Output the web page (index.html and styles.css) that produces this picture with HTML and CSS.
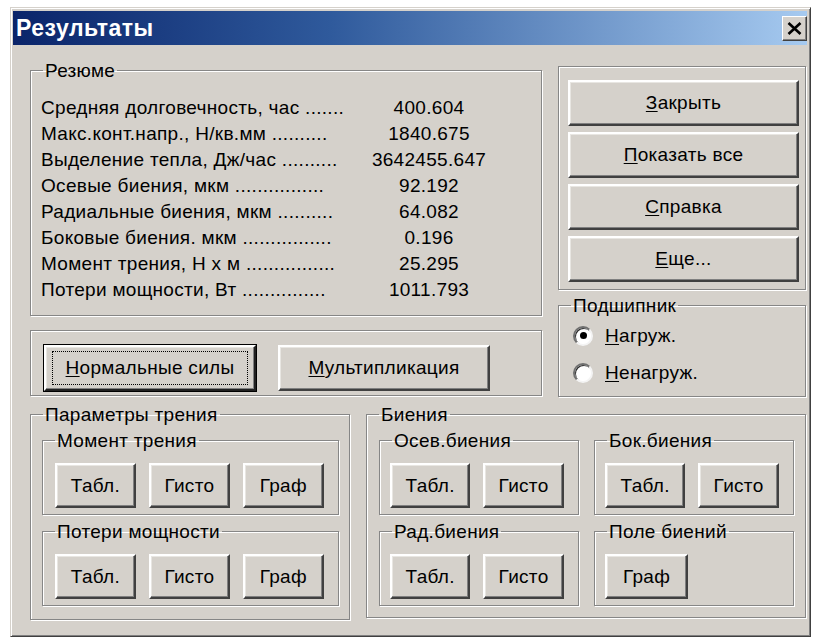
FILE: index.html
```html
<!DOCTYPE html>
<html lang="ru">
<head>
<meta charset="utf-8">
<title>Результаты</title>
<link rel="stylesheet" href="styles.css">
</head>
<body>
<div class="window">
  <div class="titlebar">
    <span class="title">Результаты</span>
    <button class="close" aria-label="Закрыть">
      <svg width="15" height="13" viewBox="0 0 15 13"><path d="M1.5 1 L13.5 12 M13.5 1 L1.5 12" stroke="#000" stroke-width="2.6" fill="none"/></svg>
    </button>
  </div>
  <div class="client">
    <div class="top">
      <div class="leftcol">
        <fieldset class="group summary">
          <legend>Резюме</legend>
          <div class="row"><span class="lbl">Средняя долговечность, час .......</span><span class="val">400.604</span></div>
          <div class="row"><span class="lbl">Макс.конт.напр., Н/кв.мм ..........</span><span class="val">1840.675</span></div>
          <div class="row"><span class="lbl">Выделение тепла, Дж/час ..........</span><span class="val">3642455.647</span></div>
          <div class="row"><span class="lbl">Осевые биения, мкм ................</span><span class="val">92.192</span></div>
          <div class="row"><span class="lbl">Радиальные биения, мкм ..........</span><span class="val">64.082</span></div>
          <div class="row"><span class="lbl">Боковые биения. мкм ................</span><span class="val">0.196</span></div>
          <div class="row"><span class="lbl">Момент трения, Н х м ................</span><span class="val">25.295</span></div>
          <div class="row"><span class="lbl">Потери мощности, Вт ...............</span><span class="val">1011.793</span></div>
        </fieldset>
        <fieldset class="group forces">
          <button class="btn wide default"><span class="focus"><u>Н</u>ормальные силы</span></button>
          <button class="btn wide"><u>М</u>ультипликация</button>
        </fieldset>
      </div>
      <div class="rightcol">
        <fieldset class="group actions">
          <button class="btn cmd"><u>З</u>акрыть</button>
          <button class="btn cmd"><u>П</u>оказать все</button>
          <button class="btn cmd"><u>С</u>правка</button>
          <button class="btn cmd"><u>Е</u>ще...</button>
        </fieldset>
        <fieldset class="group bearing">
          <legend>Подшипник</legend>
          <label class="radio"><span class="dot checked"></span><span><u>Н</u>агруж.</span></label>
          <label class="radio"><span class="dot"></span><span><u>Н</u>енагруж.</span></label>
        </fieldset>
      </div>
    </div>
    <div class="bottom">
      <fieldset class="group friction">
        <legend>Параметры трения</legend>
        <fieldset class="group sub wide3">
          <legend>Момент трения</legend>
          <div class="btnrow"><button class="btn small">Табл.</button><button class="btn small">Гисто</button><button class="btn small">Граф</button></div>
        </fieldset>
        <fieldset class="group sub wide3">
          <legend>Потери мощности</legend>
          <div class="btnrow"><button class="btn small">Табл.</button><button class="btn small">Гисто</button><button class="btn small">Граф</button></div>
        </fieldset>
      </fieldset>
      <fieldset class="group runout">
        <legend>Биения</legend>
        <div class="subgrid">
          <fieldset class="group sub">
            <legend>Осев.биения</legend>
            <div class="btnrow"><button class="btn small">Табл.</button><button class="btn small">Гисто</button></div>
          </fieldset>
          <fieldset class="group sub">
            <legend>Бок.биения</legend>
            <div class="btnrow"><button class="btn small">Табл.</button><button class="btn small">Гисто</button></div>
          </fieldset>
          <fieldset class="group sub">
            <legend>Рад.биения</legend>
            <div class="btnrow"><button class="btn small">Табл.</button><button class="btn small">Гисто</button></div>
          </fieldset>
          <fieldset class="group sub">
            <legend>Поле биений</legend>
            <div class="btnrow"><button class="btn small">Граф</button></div>
          </fieldset>
        </div>
      </fieldset>
    </div>
  </div>
</div>
</body>
</html>
```

FILE: styles.css
```css
* { box-sizing: border-box; }

body {
  margin: 0;
  background: #fff;
  font-family: "Liberation Sans", Arial, sans-serif;
  font-size: 19px;
  letter-spacing: 0.3px;
  color: #000;
}

/* dialog frame */
.window {
  margin: 7px 0 0 10px;
  width: 801px;
  height: 630px;
  background: #d5d1cb;
  border: 1px solid;
  border-color: #d5d1cb #404040 #404040 #d5d1cb;
  box-shadow: inset 1px 1px #fff, inset -1px -1px #808080;
  padding: 3px 3px 3px 2px;
  display: flex;
  flex-direction: column;
}

.titlebar {
  height: 34px;
  flex: none;
  display: flex;
  align-items: center;
  justify-content: space-between;
  background: linear-gradient(90deg, #0a246a 0%, #2f5a9c 40%, #a6caf0 100%);
  padding: 0 0 0 3px;
}

.title {
  color: #fff;
  font-weight: bold;
  font-size: 23px;
  letter-spacing: 0.5px;
}

.close {
  width: 25px;
  height: 25px;
  padding: 0;
  margin: 0;
  background: #d5d1cb;
  border: 1px solid;
  border-color: #fff #404040 #404040 #fff;
  box-shadow: inset -1px -1px #808080;
  display: flex;
  align-items: center;
  justify-content: center;
}

.client {
  flex: 1;
  padding: 16px 0 0 17px;
}

/* etched group boxes; legends sit a fixed distance from the left edge */
.group {
  --pl: 0px;
  margin: 0;
  border: 1px solid #868686;
  box-shadow: inset 1px 1px #fff, 1px 1px #fff;
  min-width: 0;
  padding-left: var(--pl);
}

.group legend {
  padding: 0 2px;
  margin-left: calc(12px - var(--pl));
  line-height: 19px;
}

.top {
  display: flex;
  gap: 16px;
}

.leftcol {
  width: 512px;
  display: flex;
  flex-direction: column;
  gap: 14px;
}

.rightcol {
  width: 248px;
  margin-top: 5px;
  display: flex;
  flex-direction: column;
  gap: 6px;
}

/* summary table */
.summary {
  --pl: 10px;
  height: 255px;
  padding-top: 15px;
}

.row {
  display: grid;
  grid-template-columns: 326px 124px;
  height: 26px;
  align-items: center;
  white-space: nowrap;
  overflow: hidden;
}

.lbl {
  overflow: hidden;
}

.val {
  text-align: center;
}

/* raised push buttons */
.btn {
  font: inherit;
  letter-spacing: inherit;
  color: #000;
  background: #d5d1cb;
  border: 2px solid;
  border-color: #fff #404040 #404040 #fff;
  box-shadow: inset -1px -1px #808080, inset 1px 1px #e8e6e2;
  padding: 0;
  margin: 0;
  display: flex;
  align-items: center;
  justify-content: center;
}

.btn u,
.radio u {
  text-decoration-thickness: 1px;
  text-underline-offset: 2px;
}

.forces {
  --pl: 13px;
  height: 66px;
  padding-top: 14px;
  display: flex;
  gap: 22px;
}

.btn.wide {
  width: 212px;
  height: 46px;
}

.btn.default {
  outline: 1px solid #000;
  border-color: #fff #202020 #202020 #fff;
}

.focus {
  border: 1px dotted #000;
  width: 196px;
  height: 34px;
  display: flex;
  align-items: center;
  justify-content: center;
}

.actions {
  --pl: 9px;
  height: 224px;
  padding-top: 13px;
  display: flex;
  flex-direction: column;
  gap: 6px;
}

.btn.cmd {
  width: 231px;
  height: 46px;
}

.bearing {
  --pl: 14px;
  height: 101px;
  padding-top: 2px;
}

.radio {
  display: flex;
  align-items: center;
  gap: 12px;
  height: 37px;
}

.dot {
  width: 20px;
  height: 20px;
  border-radius: 50%;
  border: 2px solid;
  border-color: #707070 #f4f4f4 #f4f4f4 #707070;
  background: #fff;
  box-shadow: inset 1px 1px #303030;
  display: flex;
  align-items: center;
  justify-content: center;
}

.dot.checked::after {
  content: "";
  width: 7px;
  height: 7px;
  border-radius: 50%;
  background: #000;
}

/* lower panels */
.bottom {
  display: flex;
  gap: 16px;
  margin-top: 8px;
}

.friction {
  --pl: 11px;
  width: 320px;
  height: 215px;
  padding-top: 7px;
  display: flex;
  flex-direction: column;
  gap: 7px;
}

.runout {
  --pl: 12px;
  width: 440px;
  height: 213px;
  padding-top: 7px;
}

.subgrid {
  display: grid;
  grid-template-columns: 200px 200px;
  column-gap: 15px;
  row-gap: 7px;
}

.sub {
  --pl: 10px;
  height: 84px;
  padding-top: 13px;
}

.sub.wide3 {
  --pl: 12px;
  width: 297px;
}

.btnrow {
  display: flex;
  gap: 13px;
}

.btn.small {
  width: 83px;
  height: 45px;
}
```
